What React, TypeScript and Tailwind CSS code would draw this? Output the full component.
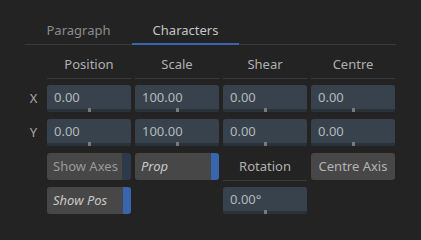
import React from "react";

const font = { fontFamily: '"Noto Sans", "Open Sans", sans-serif' };

function Field({ value }: { value: string }) {
  return (
    <div className="h-[27px] rounded-[3px] bg-[#37424d] flex flex-col overflow-hidden">
      <div className="flex-1 flex items-center pl-[7px] text-[13px] text-[#b4b8bc] leading-none pt-[1px]">
        {value}
      </div>
      <div className="h-[3px] bg-[#2a3239] flex justify-center items-end">
        <div className="w-[3px] h-[4px] -mt-[1px] bg-[#7a7a7a]" />
      </div>
    </div>
  );
}

function Header({ label }: { label: string }) {
  return (
    <div className="h-[28px] border-b border-[#3a3a3a] flex items-center justify-center text-[13px] text-[#b0b0b0]">
      {label}
    </div>
  );
}

function ToggleBtn({ label, on }: { label: string; on: boolean }) {
  return (
    <div className="h-[27px] flex rounded-[3px] overflow-hidden">
      <div
        className={
          "flex-1 bg-[#474747] flex items-center pl-[6px] text-[13px] " +
          (on ? "italic text-[#c8c8c8]" : "text-[#9a9a9a]")
        }
      >
        {label}
      </div>
      <div className={on ? "w-[8px] bg-[#3865ad]" : "w-[9px] bg-[#2d3a4a]"} />
    </div>
  );
}

export default function App() {
  return (
    <div className="w-[421px] h-[240px] bg-[#232323] overflow-hidden" style={font}>
      <div className="ml-[25px] w-[371px] h-[45px] border-b border-[#3a3a3a] flex">
        <div className="w-[107px] h-[45px] -mb-px pt-[18px] flex justify-center">
          <div className="h-[26px] flex items-center text-[13px] text-[#8c8c8c]">Paragraph</div>
        </div>
        <div className="w-[107px] h-[45px] -mb-px pt-[18px] flex flex-col items-center">
          <div className="h-[25px] flex items-center text-[13px] text-[#c4c4c4]">Characters</div>
          <div className="w-full h-[2px] bg-[#3865ad]" />
        </div>
      </div>
      <div className="mt-[6px] pl-[24px] grid grid-cols-[19px_84px_84px_84px_84px] gap-x-[4px]">
        <div />
        <Header label="Position" />
        <Header label="Scale" />
        <Header label="Shear" />
        <Header label="Centre" />

        <div className="mt-[6px] h-[27px] flex items-center justify-center text-[13px] text-[#a8a8a8]">X</div>
        <div className="mt-[6px]"><Field value="0.00" /></div>
        <div className="mt-[6px]"><Field value="100.00" /></div>
        <div className="mt-[6px]"><Field value="0.00" /></div>
        <div className="mt-[6px]"><Field value="0.00" /></div>

        <div className="mt-[7px] h-[27px] flex items-center justify-center text-[13px] text-[#a8a8a8]">Y</div>
        <div className="mt-[7px]"><Field value="0.00" /></div>
        <div className="mt-[7px]"><Field value="100.00" /></div>
        <div className="mt-[7px]"><Field value="0.00" /></div>
        <div className="mt-[7px]"><Field value="0.00" /></div>

        <div />
        <div className="mt-[7px]"><ToggleBtn label="Show Axes" on={false} /></div>
        <div className="mt-[7px]"><ToggleBtn label="Prop" on={true} /></div>
        <div className="mt-[7px] h-[28px] border-b border-[#3a3a3a] flex items-center justify-center text-[13px] text-[#b0b0b0]">
          Rotation
        </div>
        <div className="mt-[7px] h-[27px] rounded-[3px] bg-[#474747] flex items-center justify-center text-[13px] text-[#b4b4b4]">
          Centre Axis
        </div>

        <div />
        <div className="mt-[6px]"><ToggleBtn label="Show Pos" on={true} /></div>
        <div />
        <div className="mt-[6px]"><Field value="0.00°" /></div>
        <div />
      </div>
    </div>
  );
}
